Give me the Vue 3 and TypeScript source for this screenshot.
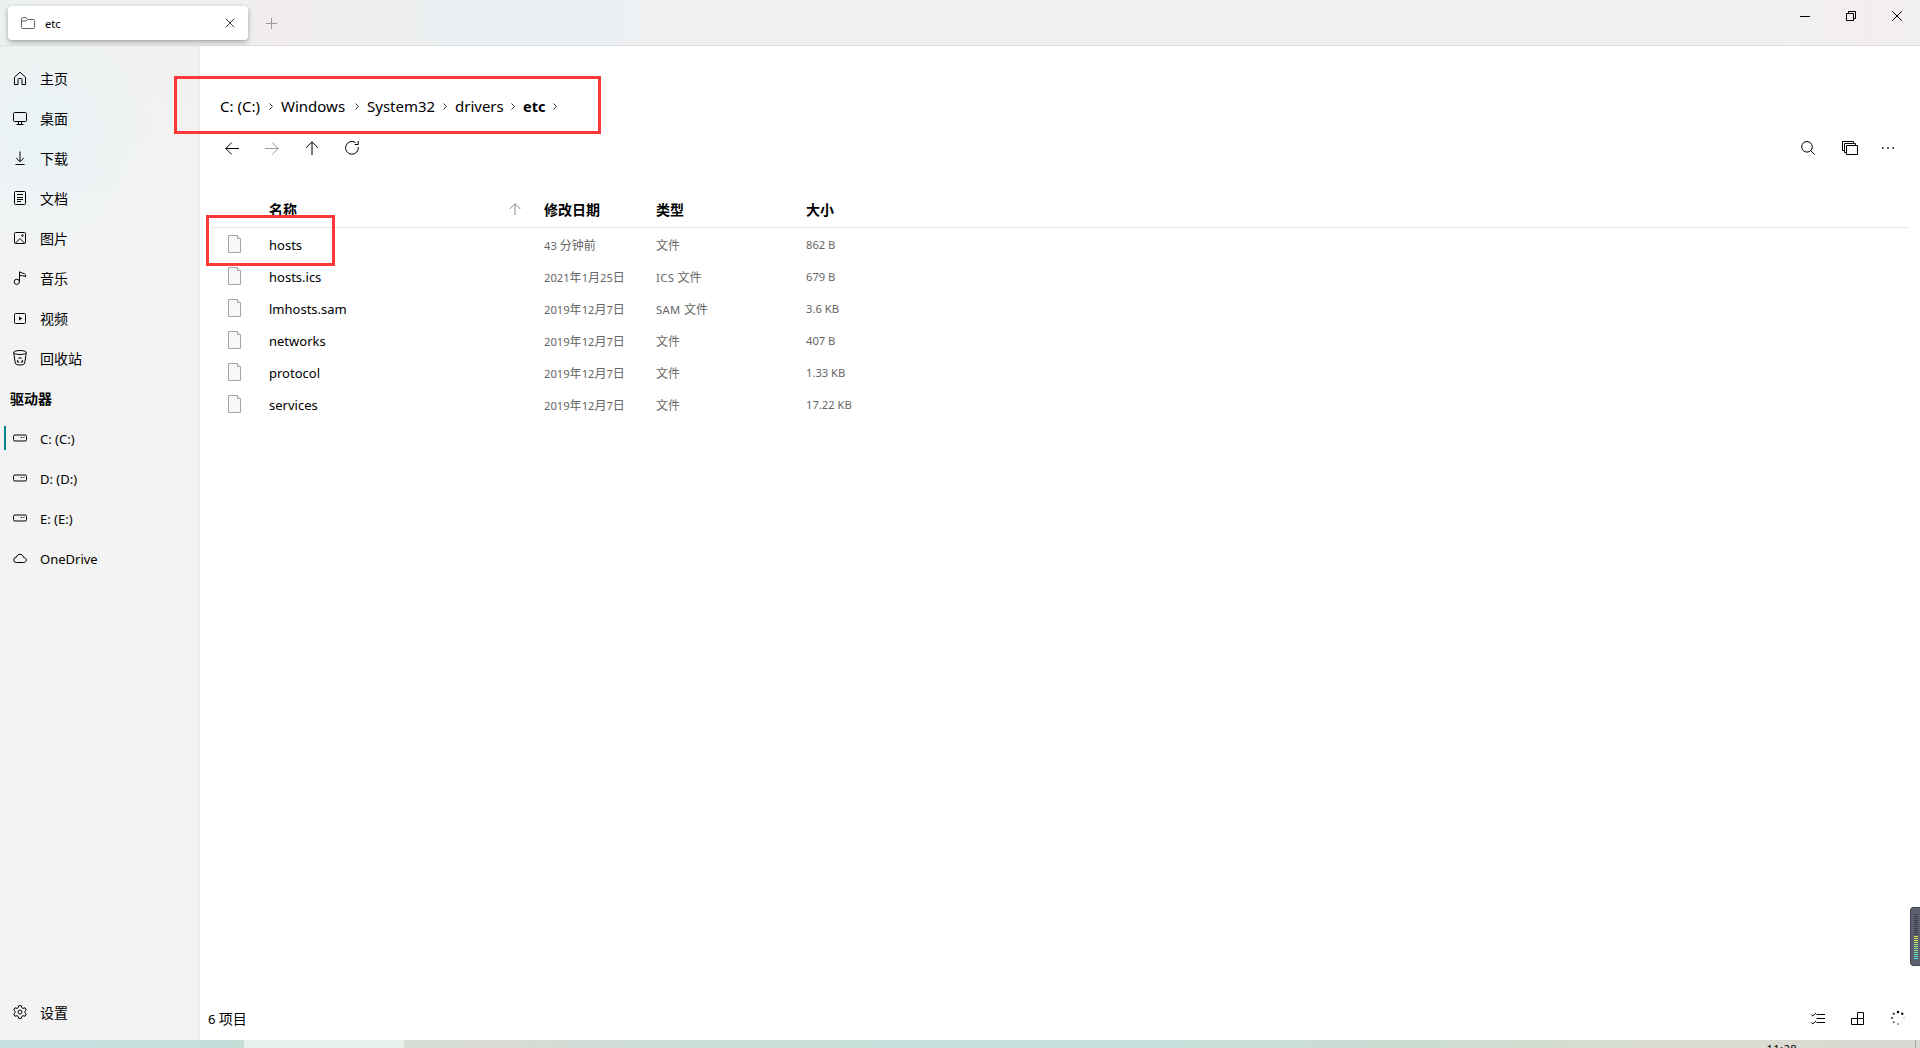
<script setup lang="ts">
interface NavItem {
  icon: string
  label: string
  active?: boolean
}
interface FileRow {
  name: string
  date: string
  type: string
  size: string
}
interface Run {
  text: string
  cjk: boolean
}

const places: NavItem[] = [
  { icon: 'home', label: '主页' },
  { icon: 'desktop', label: '桌面' },
  { icon: 'download', label: '下载' },
  { icon: 'document', label: '文档' },
  { icon: 'picture', label: '图片' },
  { icon: 'music', label: '音乐' },
  { icon: 'video', label: '视频' },
  { icon: 'recycle', label: '回收站' },
]
const drives: NavItem[] = [
  { icon: 'drive', label: 'C: (C:)', active: true },
  { icon: 'drive', label: 'D: (D:)' },
  { icon: 'drive', label: 'E: (E:)' },
  { icon: 'cloud', label: 'OneDrive' },
]
const crumbs = [
  { label: 'C: (C:)', width: 61 },
  { label: 'Windows', width: 86 },
  { label: 'System32', width: 88 },
  { label: 'drivers', width: 68 },
  { label: 'etc', width: 42 },
]
const files: FileRow[] = [
  { name: 'hosts', date: '43 分钟前', type: '文件', size: '862 B' },
  { name: 'hosts.ics', date: '2021年1月25日', type: 'ICS 文件', size: '679 B' },
  { name: 'lmhosts.sam', date: '2019年12月7日', type: 'SAM 文件', size: '3.6 KB' },
  { name: 'networks', date: '2019年12月7日', type: '文件', size: '407 B' },
  { name: 'protocol', date: '2019年12月7日', type: '文件', size: '1.33 KB' },
  { name: 'services', date: '2019年12月7日', type: '文件', size: '17.22 KB' },
]

// Inner markup of each 14 × 14 line icon
const icons: Record<string, string> = {
  home: '<path d="M1.5 6.2 7 1.2l5.5 5v7.300H9V8.500a1 1 0 0 0-1-1H6a1 1 0 0 0-1 1v5H1.500z"/>',
  desktop: '<rect x=".5" y="1.500" width="13" height="9" rx="1"/><path d="M5.500 10.500v3M8.500 10.500v3M3.500 13.500h7"/>',
  download: '<path d="M7 .5v10M3.200 7 7 10.700 10.800 7M2.500 13.500h9"/>',
  document: '<rect x="1.500" y=".5" width="11" height="13" rx="1"/><path d="M4 3.500h6M4 6.500h6M4 8.500h6M4 10.500h4"/>',
  picture: '<rect x="1.500" y="1.500" width="11" height="11" rx="1"/><path d="M2.500 12 7 7.500 11.500 12"/><circle cx="9.500" cy="4.500" r=".8"/>',
  music: '<circle cx="3.800" cy="10.800" r="2.600"/><path d="M6.500 10.800V.8c1.500 1.500 5 1 6 3v2C10.800 4.200 8.500 5 6.500 4.500"/>',
  video: '<rect x="1.500" y="2.500" width="11" height="10" rx="1"/><path d="M6 5.500v4l3.200-2z" fill="#000" stroke="none"/>',
  recycle: '<ellipse cx="7" cy="1.500" rx="6.300" ry="2"/><path d="M.7 1.500 2.300 12c.2 2.700 9.200 2.700 9.400 0l1.600-10.500"/><path d="M5.500 8 7 6.200 8.500 8M4.800 9l-.5 2h2M9.200 9l.6 2h-2"/>',
  drive: '<rect x=".5" y="4" width="13" height="6" rx="1.300"/><path d="M7.700 6.500h1.200M10.300 6.500h1.200"/>',
  cloud: '<path d="M3.300 11.500a2.600 2.600 0 0 1 0-5.200C3.800 4.300 5.200 3.300 7 3.300s3.200 1.200 3.600 3.200c1.600.1 2.700 1.100 2.700 2.500s-1.100 2.500-2.600 2.500z"/>',
  gear: '<path d="M5.700.7h2.600l.5 2 1.200.7 2-.6 1.300 2.300L11.800 6.500v1.200l1.500 1.300-1.300 2.300-2-.6-1.200.7-.5 2H5.700l-.5-2L4 10.700l-2 .6L.7 9l1.500-1.300V6.500L.7 5.100 2 2.800l2 .6 1.200-.7z"/><circle cx="7" cy="7.100" r="2"/>',
}

const meterBars = Array.from({ length: 23 }, (_, i) => {
  if (i < 11) return '#3c404c'
  const t = (i - 11) / 11
  return `rgb(${Math.round(218 - 140 * t)}, ${Math.round(232 - 8 * t)}, ${Math.round(75 + 125 * t)})`
})

const dots = [1, 0.9, 0.18, 0.08, 0.45, 0.65, 0.8, 0.95].map((opacity, i) => {
  const a = ((i * 45 - 90) * Math.PI) / 180
  return { x: 7 + 6 * Math.cos(a), y: 7 + 6 * Math.sin(a), opacity, r: i < 2 ? 1.25 : 1 }
})

// Splits mixed text so that Han and Latin runs can be sized separately
function runs(text: string): Run[] {
  return (text.match(/[\u4e00-\u9fff]+|[^\u4e00-\u9fff]+/g) ?? []).map((t) => ({
    text: t,
    cjk: /[\u4e00-\u9fff]/.test(t),
  }))
}
</script>

<template>
  <div class="window">
    <header class="titlebar">
      <div class="tab">
        <svg class="tab-folder" width="14" height="12" viewBox="0 0 14 12"><path d="M.5 10.500v-9a1 1 0 0 1 1-1H5l1.500 2h6a1 1 0 0 1 1 1v7a1 1 0 0 1-1 1h-11a1 1 0 0 1-1-1zM.5 4H5l1.500-1.500" /></svg>
        <span class="tab-label">etc</span>
        <svg class="tab-close" width="10" height="10" viewBox="0 0 10 10"><path d="M.7.7l8.600 8.600M9.300.7.7 9.300" /></svg>
      </div>
      <svg class="tab-add" width="11" height="11" viewBox="0 0 11 11"><path d="M5.500 0v11M0 5.500h11" /></svg>
      <div class="caption">
        <svg width="10" height="10" viewBox="0 0 10 10"><path d="M0 5.500h10" /></svg>
        <svg width="10" height="10" viewBox="0 0 10 10"><path d="M.5 2.500h7v7h-7zM2.500 2.500v-2h7v7h-2" /></svg>
        <svg width="10" height="10" viewBox="0 0 10 10"><path d="M.2.2l9.600 9.600M9.800.2.2 9.800" /></svg>
      </div>
    </header>

    <div class="body">
      <nav class="sidebar">
        <div v-for="item in places" :key="item.label" class="nav-item">
          <svg class="icon" width="14" height="14" viewBox="0 0 14 14" v-html="icons[item.icon]" />
          <span class="zh">{{ item.label }}</span>
        </div>
        <div class="nav-heading">驱动器</div>
        <div v-for="item in drives" :key="item.label" class="nav-item" :class="{ active: item.active }">
          <svg class="icon" width="14" height="14" viewBox="0 0 14 14" v-html="icons[item.icon]" />
          <span class="latin">{{ item.label }}</span>
        </div>
        <div class="nav-item settings">
          <svg class="icon" width="14" height="14" viewBox="0 0 14 14" v-html="icons.gear" />
          <span class="zh">设置</span>
        </div>
      </nav>

      <main class="content">
        <div class="breadcrumb">
          <div v-for="c in crumbs" :key="c.label" class="crumb" :style="{ width: c.width + 'px' }">
            <span>{{ c.label }}</span>
            <svg width="4" height="7" viewBox="0 0 4 7"><path d="M.5.5l3 3-3 3" /></svg>
          </div>
        </div>

        <div class="toolbar">
          <svg width="14" height="14" viewBox="0 0 14 14"><path d="M14 7.500H.8M6.800 1.500l-6 6 6 6" /></svg>
          <svg class="disabled" width="14" height="14" viewBox="0 0 14 14"><path d="M0 7.500h13.200M7.200 1.500l6 6-6 6" /></svg>
          <svg width="14" height="14" viewBox="0 0 14 14"><path d="M7 14V.8M1 6.800l6-6 6 6" /></svg>
          <svg width="14" height="14" viewBox="0 0 14 14"><path d="M10.500 1.500A6.400 6.400 0 1 0 13.300 6M13.200 0v3.500H9.700" /></svg>
          <span class="spacer" />
          <svg class="search" width="14" height="14" viewBox="0 0 14 14"><circle cx="6" cy="5.800" r="5.300" /><path d="M9.700 9.500l4 4.200" /></svg>
          <svg class="windows" width="16" height="14" viewBox="0 0 16 14"><path d="M4.500 4.500h11v9h-11zM2.500 11.500v-9h11v2M4.500 11.500h-2M2.500 9.500h-2v-9h11v2" /></svg>
          <svg class="more" width="14" height="14" viewBox="0 0 14 14"><path d="M1 7h1.600M6.200 7h1.600M11.400 7h1.600" /></svg>
        </div>

        <div class="table">
          <div class="row head">
            <span class="cell name">名称</span>
            <svg class="sort" width="12" height="12" viewBox="0 0 12 12"><path d="M6 12V.7M.7 6 6 .7 11.300 6" /></svg>
            <span class="cell date">修改日期</span>
            <span class="cell type">类型</span>
            <span class="cell size">大小</span>
          </div>
          <div v-for="f in files" :key="f.name" class="row">
            <svg class="file" width="13" height="18" viewBox="0 0 13 18"><path d="M.5.5h9l3 3v14H.5z" fill="#f7f8f8" stroke="#a5a5a5" /><path d="M9.500.5v3h3" fill="#fff" stroke="#a5a5a5" /></svg>
            <span class="cell name">{{ f.name }}</span>
            <span class="cell date"><span v-for="(r, i) in runs(f.date)" :key="i" :class="{ han: r.cjk }">{{ r.text }}</span></span>
            <span class="cell type"><span v-for="(r, i) in runs(f.type)" :key="i" :class="r.cjk ? 'han' : 'ext'">{{ r.text }}</span></span>
            <span class="cell size">{{ f.size }}</span>
          </div>
        </div>

        <footer class="status">
          <span class="count">6 <span class="zh">项目</span></span>
          <span class="spacer" />
          <svg width="14" height="14" viewBox="0 0 14 14"><path d="M5.500 3.500H14M5.500 7.500H14M5.500 11.500H14M.3 3.500l1.500 1.500L5 2M.3 11.500l1.500 1.500L5 10" /></svg>
          <svg width="14" height="14" viewBox="0 0 14 14"><path d="M.5 7.500h6v6h-6zM6.500 7.500h6v6h-6zM6.500 7.500v-6h6v6" /></svg>
          <svg width="14" height="14" viewBox="0 0 14 14"><circle v-for="(d, i) in dots" :key="i" class="dot" :cx="d.x" :cy="d.y" :r="d.r" :opacity="d.opacity" /></svg>
        </footer>
      </main>
    </div>

    <div class="taskbar">
      <div class="task-active" />
      <span class="clock">11:28</span>
      <div class="show-desktop" />
    </div>

    <div class="mark mark-path" />
    <div class="mark mark-file" />
    <div class="meter"><i v-for="(c, i) in meterBars" :key="i" :style="{ background: c }" /></div>
  </div>
</template>

<style>
body {
  margin: 0;
  overflow: hidden;
}
</style>

<style scoped>
.window {
  position: relative;
  display: flex;
  flex-direction: column;
  width: 1920px;
  height: 1048px;
  overflow: hidden;
  background: #fff;
  color: #000;
  font-family: "Noto Sans", "Noto Sans CJK SC", sans-serif;
  font-size: 13px;
}
svg {
  display: block;
  flex: none;
  fill: none;
  stroke: #000;
  stroke-width: 1;
  overflow: visible;
}
.spacer {
  flex: 1;
}
.zh {
  font-family: "Noto Sans CJK SC", sans-serif;
  font-size: 14px;
}
.titlebar {
  display: flex;
  box-sizing: border-box;
  height: 46px;
  flex: none;
  padding: 6px 18px 0 8px;
  border-bottom: 1px solid #dedfe0;
  background: linear-gradient(90deg, #edf0f0 0, #eeefef 220px, #f2edec 280px, #eeeff0 380px, #e9eff2 510px, #eef0f2 650px, #eff0f2 1760px, #f3edf0 1870px, #f1eff1 100%);
}
.tab {
  display: flex;
  align-items: center;
  box-sizing: border-box;
  width: 240px;
  height: 34px;
  padding: 0 13px;
  border-radius: 4px;
  background: #fff;
  box-shadow: 0 2px 5px rgba(0, 0, 0, 0.32);
}
.tab-folder {
  stroke: #666;
}
.tab-label {
  margin: 0 auto 0 10px;
  font-size: 11.200px;
}
.tab-close {
  stroke: #444;
}
.tab-add {
  margin: 12px 0 0 18px;
  stroke: #999;
}
.caption {
  display: flex;
  gap: 36px;
  margin: 5px 0 0 auto;
}
.body {
  display: flex;
  flex: 1;
  min-height: 0;
}
.sidebar {
  display: flex;
  flex-direction: column;
  box-sizing: border-box;
  width: 200px;
  padding: 12px 0 8px;
  background: radial-gradient(ellipse 130px 140px at 40px 85px, #e9f3f6, rgba(236, 243, 245, 0.6) 55%, transparent), linear-gradient(180deg, #f1f1f0, #f3f3f3 180px);
  box-shadow: inset -3px 0 3px -2px rgba(0, 0, 0, 0.05);
}
.nav-item {
  position: relative;
  display: flex;
  align-items: center;
  height: 40px;
  padding-left: 13px;
}
.nav-item span {
  margin-left: 13px;
  line-height: 20px;
}
.nav-item .latin {
  margin-top: 2px;
}
.active::before {
  content: "";
  position: absolute;
  left: 4px;
  top: 8px;
  width: 2px;
  height: 24px;
  background: #00828a;
}
.nav-heading {
  height: 40px;
  padding-left: 10px;
  font: bold 14px/40px "Noto Sans CJK SC", sans-serif;
}
.settings {
  margin-top: auto;
}
.content {
  display: flex;
  flex-direction: column;
  flex: 1;
}
.breadcrumb {
  display: flex;
  align-items: center;
  height: 28px;
  margin: 46px 0 0 20px;
  font-size: 15px;
}
.crumb {
  display: flex;
  align-items: center;
  justify-content: space-between;
  box-sizing: border-box;
  padding-right: 8px;
  white-space: nowrap;
}
.crumb svg {
  stroke: #333;
}
.crumb:last-child {
  font-size: 14.500px;
  font-weight: bold;
}
.toolbar {
  display: flex;
  align-items: center;
  gap: 26px;
  height: 28px;
  padding: 0 25px;
  margin-top: 14px;
}
.disabled {
  stroke: #999;
}
.windows {
  margin-left: 1px;
}
.more {
  margin-left: -3px;
  stroke-width: 1.500;
}
.table {
  display: flex;
  flex-direction: column;
  margin: 32px 12px 0 12px;
}
.row {
  display: flex;
  align-items: center;
  height: 32px;
}
.head {
  box-sizing: border-box;
  height: 34px;
  padding-bottom: 3px;
  border-bottom: 1px solid #e6e6e6;
  font: bold 14px "Noto Sans CJK SC", sans-serif;
}
.head .name {
  width: 240px;
  margin: 0 0 0 57px;
}
.sort {
  margin-right: 23px;
  stroke: #888;
}
.file {
  margin: 0 28px 0 16px;
}
.name {
  width: 275px;
  margin-top: 2px;
}
.row:not(.head) .date,
.row:not(.head) .type,
.row:not(.head) .size {
  color: #666;
  font-size: 11.200px;
}
.date {
  width: 112px;
  white-space: nowrap;
}
.type {
  width: 150px;
}
.ext {
  letter-spacing: 0.4px;
}
.han {
  font-family: "Noto Sans CJK SC", sans-serif;
  font-size: 12px;
}
.status {
  display: flex;
  align-items: center;
  gap: 26px;
  height: 44px;
  padding: 0 15px 0 8px;
  margin-top: auto;
}
.dot {
  fill: #000;
  stroke: none;
}
.taskbar {
  display: flex;
  height: 8px;
  flex: none;
  overflow: hidden;
  background: linear-gradient(90deg, #c3dfe0 0, #c5ded8 244px, #d4ddd3 404px, #d9dad5 500px, #c8ded7 700px, #c5e0dc 1100px, #cbdcd2 1400px, #dcddd0 1700px, #d7d7d3 1920px);
}
.task-active {
  width: 160px;
  margin-left: 244px;
  background: #e9f1ee;
}
.clock {
  margin-left: auto;
  margin-right: 118px;
  font-size: 11.200px;
  letter-spacing: 0.4px;
  line-height: 18px;
}
.show-desktop {
  width: 4px;
  border-left: 1px solid #aaa;
}
.mark {
  position: absolute;
  box-sizing: border-box;
  border: 3px solid #fc3737;
}
.mark-path {
  left: 174px;
  top: 76px;
  width: 427px;
  height: 58px;
}
.mark-file {
  left: 206px;
  top: 215px;
  width: 129px;
  height: 51px;
}
.meter {
  position: absolute;
  right: 0;
  top: 907px;
  display: flex;
  flex-direction: column;
  gap: 1px;
  box-sizing: border-box;
  width: 10px;
  height: 59px;
  padding: 6px 1px 0 3px;
  border: 1px solid #41434f;
  border-right: 0;
  border-radius: 4px 0 0 4px;
  background: #5b5f70;
}
.meter i {
  width: 4px;
  height: 1px;
}
</style>
